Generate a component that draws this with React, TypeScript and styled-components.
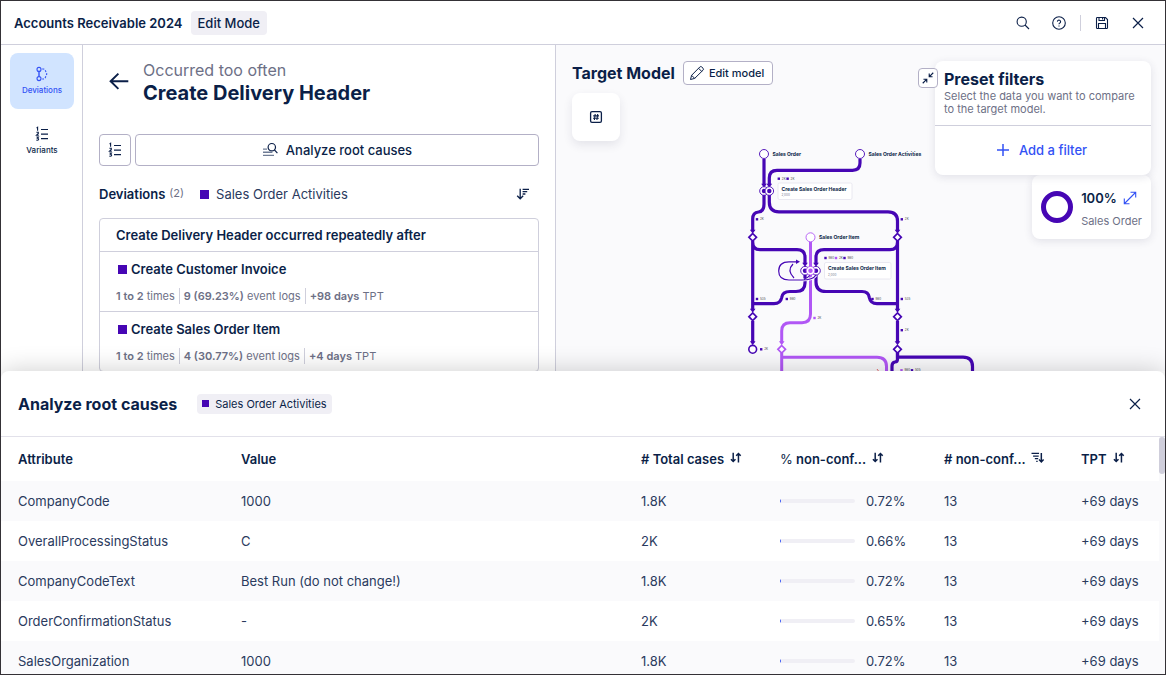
import React from "react";
import styled, { createGlobalStyle } from "styled-components";

const c = {
  ink: "#0b1f48",
  text: "#2a3a5e",
  muted: "#6d7086",
  line: "#cfcfdc",
  control: "#b3b0c6",
  soft: "#f0eff5",
  canvas: "#fafafc",
  blue: "#3352f5",
  purple: "#4606b4",
  lilac: "#b157f5",
};

const GlobalStyle = createGlobalStyle`
  *, *::before, *::after { box-sizing: border-box; }
  body { margin: 0; background: #fff; color: ${c.ink}; font-family: Inter, "Liberation Sans", sans-serif; font-size: 13px; line-height: 16px; }
  h1, h2, h3, h4, p, ul { margin: 0; padding: 0; }
  ul { list-style: none; }
  button { font: inherit; color: inherit; cursor: pointer; }
  svg { display: block; flex: none; }
`;

const Frame = styled.div`
  height: 100vh;
  display: grid;
  grid-template-rows: auto minmax(0, 1fr) 303px;
  border: 1px solid #343136;
  overflow: hidden;
`;

const TopBar = styled.header`
  display: flex;
  align-items: center;
  justify-content: space-between;
  height: 44px;
  padding: 0 15px 0 13px;
  border-bottom: 1px solid ${c.line};
`;

const Row = styled.div<{ $gap: number }>`
  display: flex;
  align-items: center;
  gap: ${(p) => p.$gap}px;
`;

const AppTitle = styled.h1`
  font-size: 13px;
  line-height: 16px;
  font-weight: 600;
`;

const ModeBadge = styled.span`
  padding: 4px 7px;
  border-radius: 4px;
  background: ${c.soft};
  font-size: 13px;
  line-height: 16px;
  font-weight: 500;
`;

const IconButton = styled.button`
  display: flex;
  align-items: center;
  justify-content: center;
  width: 24px;
  height: 24px;
  padding: 0;
  border: 0;
  background: none;
`;

const BarDivider = styled.span`
  width: 1px;
  height: 16px;
  background: ${c.line};
`;

const Workspace = styled.main`
  display: flex;
  min-height: 0;
  overflow: hidden;
`;

const SideNav = styled.nav`
  flex: 0 0 82px;
  display: flex;
  flex-direction: column;
  gap: 4px;
  padding: 8px 8px 0 9px;
  border-right: 1px solid ${c.line};
`;

const NavItem = styled.button<{ $active?: boolean }>`
  display: flex;
  flex-direction: column;
  align-items: center;
  justify-content: center;
  gap: 2px;
  height: 56px;
  padding: 0;
  border: 0;
  border-radius: 8px;
  background: ${(p) => (p.$active ? "#d1e4ff" : "none")};
  color: ${(p) => (p.$active ? c.blue : c.ink)};
  font-size: 8px;
  line-height: 12px;
  font-weight: 500;
`;

const DetailPanel = styled.section`
  flex: 0 0 473px;
  padding: 15px 16px 0;
  border-right: 1px solid ${c.line};
  overflow: hidden;
`;

const DetailHeader = styled.div`
  display: flex;
  align-items: center;
  gap: 12px;
  padding-left: 8px;
  height: 44px;
`;

const Kicker = styled.p`
  font-size: 16px;
  line-height: 22px;
  color: ${c.muted};
`;

const DetailTitle = styled.h2`
  font-size: 20px;
  line-height: 24px;
  font-weight: 700;
`;

const Actions = styled.div`
  display: flex;
  gap: 4px;
  margin-top: 30px;
`;

const OutlineButton = styled.button<{ $size: "icon" | "wide" | "small" }>`
  display: flex;
  align-items: center;
  justify-content: center;
  gap: ${(p) => (p.$size === "small" ? 4 : 8)}px;
  flex: ${(p) => (p.$size === "wide" ? "1" : "none")};
  width: ${(p) => (p.$size === "icon" ? "32px" : "auto")};
  height: ${(p) => (p.$size === "small" ? 24 : 32)}px;
  padding: ${(p) => (p.$size === "small" ? "0 8px 0 5px" : "0")};
  border: 1px solid ${c.control};
  border-radius: 4px;
  background: #fff;
  font-size: ${(p) => (p.$size === "small" ? 11 : 13)}px;
  font-weight: 500;
`;

const ListHeading = styled.div`
  display: flex;
  align-items: center;
  margin-top: 16px;
  height: 24px;
  padding-right: 4px;
`;

const ListTitle = styled.h3`
  font-size: 13px;
  line-height: 16px;
  font-weight: 600;
`;

const Count = styled.span`
  margin: 0 16px 3px 4px;
  font-size: 11px;
  color: ${c.muted};
`;

const Swatch = styled.span<{ $size?: number }>`
  width: ${(p) => p.$size ?? 9}px;
  height: ${(p) => p.$size ?? 9}px;
  background: ${c.purple};
`;

const TypeName = styled.span`
  margin: 0 auto 0 7px;
  color: ${c.text};
`;

const DeviationCard = styled.section`
  margin-top: 12px;
  border: 1px solid ${c.line};
  border-radius: 4px;
`;

const CardHeading = styled.h3`
  height: 32px;
  padding: 0 16px;
  font-size: 13px;
  line-height: 32px;
  font-weight: 600;
`;

const DeviationItem = styled.li`
  height: 60px;
  padding: 9px 16px 0;
  border-top: 1px solid ${c.line};
`;

const DeviationName = styled.h4`
  display: flex;
  align-items: center;
  gap: 4px;
  padding-left: 2px;
  font-size: 13px;
  line-height: 16px;
  font-weight: 600;
`;

const Facts = styled.p`
  display: flex;
  margin-top: 11px;
  font-size: 11px;
  line-height: 16px;
  color: ${c.muted};
  white-space: nowrap;
`;

const Fact = styled.span`
  & + & {
    margin-left: 4px;
    padding-left: 4px;
    border-left: 1px solid ${c.line};
  }
  strong { font-weight: 600; }
`;

const ModelArea = styled.section`
  position: relative;
  flex: 1;
  min-width: 0;
  display: flex;
  justify-content: space-between;
  padding: 16px 14px 0 16px;
  background: ${c.canvas};
  overflow: hidden;
`;

const ModelCanvas = styled.div`
  position: absolute;
  inset: 0;
  display: flex;
  justify-content: center;
  padding-top: 95px;
`;

const ModelTools = styled.div`
  position: relative;
  display: flex;
  flex-direction: column;
  gap: 8px;
`;

const SectionTitle = styled.h2`
  font-size: 16px;
  line-height: 20px;
  font-weight: 700;
`;

const ToolTile = styled.button`
  display: flex;
  align-items: center;
  justify-content: center;
  width: 48px;
  height: 48px;
  padding: 0;
  border: 0;
  border-radius: 8px;
  background: #fff;
  box-shadow: 0 4px 10px rgba(40, 40, 80, 0.1);
`;

const FilterColumn = styled.div`
  position: relative;
  display: flex;
  flex-direction: column;
  align-items: flex-end;
  width: 216px;
`;

const FilterCard = styled.section`
  position: relative;
  width: 100%;
  border-radius: 8px;
  background: #fff;
  box-shadow: 0 2px 8px rgba(40, 40, 80, 0.12);
`;

const CollapseButton = styled.button`
  position: absolute;
  top: 7px;
  left: -17px;
  display: flex;
  align-items: center;
  justify-content: center;
  width: 20px;
  height: 20px;
  padding: 0;
  border: 1px solid ${c.control};
  border-radius: 4px;
  background: #fff;
`;

const FilterIntro = styled.div`
  padding: 8px 9px;
  border-bottom: 1px solid ${c.line};
`;

const FilterText = styled.p`
  font-size: 11px;
  line-height: 13px;
  padding: 1px 0;
  color: ${c.muted};
`;

const AddFilter = styled.button`
  display: flex;
  align-items: center;
  justify-content: center;
  gap: 8px;
  width: 100%;
  height: 49px;
  padding: 0 4px 2px 0;
  border: 0;
  background: none;
  color: ${c.blue};
  font-size: 13px;
  font-weight: 500;
`;

const CoverageCard = styled.section`
  display: flex;
  align-items: center;
  gap: 8px;
  height: 64px;
  padding: 0 9px;
  border-radius: 8px;
  background: #fff;
  box-shadow: 0 2px 8px rgba(40, 40, 80, 0.12);
`;

const CoverageText = styled.div`
  display: flex;
  flex-direction: column;
  gap: 7px;
  padding-top: 4px;
  font-size: 11px;
  color: ${c.muted};
  strong { font-size: 13px; font-weight: 600; color: ${c.ink}; }
`;

const ExpandButton = styled(IconButton)`
  width: 16px;
  height: 16px;
  color: ${c.blue};
`;

const RootCausePanel = styled.section`
  position: relative;
  display: flex;
  flex-direction: column;
  border-radius: 8px 8px 0 0;
  background: #fff;
  box-shadow: 0 0 26px rgba(0, 0, 0, 0.2);
`;

const PanelHeader = styled.header`
  display: flex;
  align-items: center;
  justify-content: space-between;
  flex: 0 0 66px;
  padding: 0 18px 0 17px;
  border-bottom: 1px solid #e2e1ea;
`;

const TypeBadge = styled.span`
  display: flex;
  align-items: center;
  gap: 6px;
  height: 20px;
  padding: 0 5px;
  border-radius: 4px;
  background: ${c.soft};
  font-size: 11px;
`;

const TableArea = styled.div`
  display: flex;
  min-height: 0;
  flex: 1;
  overflow: hidden;
`;

const ScrollTrack = styled.div`
  flex: 0 0 6px;
  background: ${c.canvas};
`;

const ScrollThumb = styled.div`
  height: 37px;
  border-radius: 3px;
  background: #cfcedb;
`;

const Table = styled.table`
  flex: 1;
  align-self: flex-start;
  min-width: 0;
  table-layout: fixed;
  border-collapse: collapse;
  color: ${c.text};
  tbody tr:nth-child(odd) { background: ${c.canvas}; }
`;

const Col = styled.col<{ $w?: number }>`
  width: ${(p) => (p.$w ? p.$w + "px" : "auto")};
`;

const Th = styled.th`
  height: 44px;
  padding: 0 0 0 17px;
  text-align: left;
  font-weight: 600;
  color: ${c.ink};
  white-space: nowrap;
`;

const Td = styled.td`
  height: 40px;
  padding: 0 0 0 17px;
  white-space: nowrap;
`;

const SortButton = styled.button`
  display: flex;
  align-items: center;
  gap: 5px;
  padding: 0;
  border: 0;
  background: none;
  font-weight: 600;
`;

const Unit = styled.span`
  font-weight: 400;
`;

const Meter = styled.div`
  width: 75px;
  height: 4px;
  border-radius: 2px;
  background: ${c.soft};
  overflow: hidden;
`;

const MeterFill = styled.div`
  height: 100%;
  min-width: 1px;
  background: ${c.blue};
`;

type IconProps = { size?: number; sw?: number; children: React.ReactNode };
const Icon = ({ size = 16, sw = 1.2, children }: IconProps) => (
  <svg width={size} height={size} viewBox="0 0 16 16" fill="none" stroke="currentColor" strokeWidth={sw} aria-hidden="true">
    {children}
  </svg>
);

const SearchIcon = () => (
  <Icon sw={1.1}>
    <circle cx="6.7" cy="6.7" r="4.6" />
    <path d="M10 10l4 4" />
  </Icon>
);
const HelpIcon = () => (
  <Icon sw={1.1}>
    <circle cx="8" cy="8" r="6.3" />
    <path d="M6.4 6.6a1.6 1.6 0 1 1 2.400 1.500c-.6.3-.8.6-.8 1.200" />
    <path d="M8 10.400v1.200" />
  </Icon>
);
const SaveIcon = () => (
  <Icon sw={1.1}>
    <path d="M2.500 3.300q0-.8.8-.8h8.200l2 2v8.200q0 .8-.8.8H3.300q-.8 0-.8-.8z" />
    <path d="M5 2.500v3h5.500v-3M8.600 3v1.500M4.500 13.500V8.500h7v5" />
  </Icon>
);
const CloseIcon = () => (
  <Icon sw={1.2}>
    <path d="M3 3l10 10M13 3L3 13" />
  </Icon>
);
const DeviationIcon = () => (
  <Icon sw={1.1}>
    <circle cx="5" cy="3.4" r="2" />
    <circle cx="5" cy="12.6" r="2" />
    <path d="M5 5.4v5.2" strokeWidth="1.4" />
    <path d="M8.200 3h1.200q1.600.2 2 1.600l1.400 3.400-1.400 3.400q-.4 1.400-2 1.600H8.200" strokeDasharray="2 1.300" />
  </Icon>
);
const NumberedListIcon = () => (
  <Icon sw={1.2}>
    <path d="M7 3.500h7M7 8.200h7M7 12.600h7" />
    <path d="M2.600 2l1-.7v3.400M2.400 6.300h1.900v1.200L2.500 9.300h2.300M2.400 11h2l-1 1.300q1.300 0 1.200 1-.3 1.200-2.200.8" strokeWidth="1.100" />
  </Icon>
);
const BackIcon = () => (
  <Icon size={24} sw={1.3}>
    <path d="M14.200 7.500H2.400M7.600 2.400L2.400 7.500l5.200 5.100" />
  </Icon>
);
const AnalyzeIcon = () => (
  <Icon sw={1.2}>
    <circle cx="9.800" cy="5.200" r="3.700" />
    <path d="M12.400 7.900l3 3.300" />
    <path d="M1 7.100h4M1 10.300h9.400M1 13.400h11" stroke="#6f7c95" strokeWidth="1.400" />
  </Icon>
);
const SortListIcon = () => (
  <Icon sw={1.3}>
    <path d="M5.200 2.800v9.800M2.200 9.700l3 3.100 3-3.100" />
    <path d="M7.600 3.300H14M7.600 5.600h4.600M7.600 8h2.800" />
  </Icon>
);
const PencilIcon = () => (
  <Icon sw={1}>
    <path d="M1.500 14.500l1.100-4.200L10.800 2q1-1 2 0l1.200 1.200q1 1 0 2L5.700 13.400z" />
    <path d="M9.600 3.300l3.100 3.100M2.600 10.300l3.100 3.100" />
  </Icon>
);
const HashIcon = () => (
  <Icon sw={1.3}>
    <rect x="2.600" y="2.600" width="10.800" height="10.800" rx="1.400" />
    <path d="M7.200 5l-.8 6M9.700 5l-.8 6M5.200 6.900h5.800M5 9.200h5.800" strokeWidth="1.100" />
  </Icon>
);
const CollapseIcon = () => (
  <Icon size={14} sw={1.3}>
    <path d="M14 2L9.600 6.400M9.400 2.800v3.800h3.800M2 14l4.400-4.400M2.800 9.400h3.800v3.800" />
  </Icon>
);
const PlusIcon = () => (
  <Icon sw={1.5}>
    <path d="M8 2v12M2 8h12" />
  </Icon>
);
const ExpandIcon = () => (
  <Icon sw={1.1}>
    <path d="M2.500 13.500l11-11M8.500 2.300h5.200v5.200M2.300 8.500v5.200h5.200" />
  </Icon>
);
const SortBothIcon = () => (
  <Icon size={14} sw={1.7}>
    <path d="M4.800 .8v10M2.200 8.200l2.600 2.700 2.600-2.700M10.800 12V2M8.200 4.400l2.600-2.700 2.600 2.700" />
  </Icon>
);
const SortDescIcon = () => (
  <Icon size={14} sw={1.4}>
    <path d="M11.800 1v10M9.200 8.500l2.600 2.800 2.600-2.800" strokeWidth="1.700" />
    <path d="M.6 1.600h8.600M2.400 4.600h6.400M4.400 7.600h3.800M6 10.600h1.600" />
  </Icon>
);

const P = c.purple;
const L = c.lilac;

const Tag = ({ x, y, t, color = P }: { x: number; y: number; t: string; color?: string }) => (
  <g>
    <rect x={x - 1.2} y={y - 1.2} width="2.4" height="2.4" fill={color} />
    <text x={x + 3} y={y + 1.1} fontSize="3" fill="#444">{t}</text>
  </g>
);
const Gate = ({ x, y, color = P }: { x: number; y: number; color?: string }) => (
  <path d={`M${x} ${y - 3.8}l3.8 3.8l-3.8 3.8l-3.8 -3.8z`} fill="#fff" stroke={color} strokeWidth="1.7" />
);
const Arrow = ({ x, y, color = P }: { x: number; y: number; color?: string }) => (
  <path d={`M${x - 2.8} ${y - 3.8}h5.6l-2.8 4z`} fill={color} />
);
const EventNode = ({ x, y, color = P }: { x: number; y: number; color?: string }) => (
  <g>
    <circle cx={x} cy={y} r="4.3" fill="#fff" stroke={color} strokeWidth=".9" />
    <circle cx={x} cy={y} r="2.2" fill={color} />
  </g>
);
const StartNode = ({ x, y, t, color = P }: { x: number; y: number; t: string; color?: string }) => (
  <g>
    <circle cx={x} cy={y} r="4.5" fill="#fff" stroke={color} strokeWidth=".9" />
    <text x={x + 8.5} y={y + 1.8} fontSize="5" fontWeight="700" fill={c.ink}>{t}</text>
  </g>
);
const ActivityBox = ({ x, y, w, t }: { x: number; y: number; w: number; t: string }) => (
  <g>
    <rect x={x} y={y} width={w} height="16.5" rx="1.5" fill="#fff" stroke="#e4e3ee" strokeWidth=".8" />
    <text x={x + 3.5} y={y + 7.5} fontSize="5" fontWeight="700" fill={c.ink}>{t}</text>
    <text x={x + 3.5} y={y + 13} fontSize="3" fill="#6d7086">2,000</text>
  </g>
);

const ProcessGraph = () => (
  <svg width="250" height="240" viewBox="736 140 250 240" fill="none" role="img" aria-label="Target process model">
    <g stroke={L} strokeWidth="3">
      <path d="M810.5 242V314Q810.5 322.7 802 322.7H790Q781.7 322.7 781.7 331V343" />
      <path d="M781.7 353V380M781.7 357.2H877Q886.5 357.2 886.5 366.5V380" />
    </g>
    <g stroke={P} strokeWidth="3.2">
      <path d="M764 159V185" />
      <path d="M860 159V163Q860 170.3 852.5 170.3H777Q769.3 170.3 769.3 178V185" />
      <path d="M764 195V204Q764 211.5 758.5 212Q752.7 212.5 752.7 219V231" />
      <path d="M769.3 195V202Q769.3 211.8 779 211.8H888Q897.5 211.8 897.5 221V231" />
      <path d="M752.7 241V310M752.7 242Q752.7 249.7 760 249.7H797Q805 249.7 805 257V264" />
      <path d="M897.5 241V310M897.5 242Q897.5 249.7 890 249.7H824Q816 249.7 816 257V264" />
      <path d="M805 275V283Q805 291.5 796 291.5H790Q782.5 291.5 781.7 297.5Q780.5 303.7 774 303.7H752.7" />
      <path d="M816 275V282Q816 291.5 826 291.5H862Q868.5 291.5 869.3 297.5Q870.5 303.7 877 303.7H897.5" />
      <path d="M752.7 321V343M897.5 321V343" />
      <path d="M897.5 352V357.2H963Q972.5 357.2 972.5 366.5V380" />
      <path d="M897.5 353V359Q897.5 362 895 362Q892 362.5 892 366V380" />
    </g>
    <path d="M816 275Q813 280 802 280H789Q778.7 280 778.7 271Q778.7 261.8 789 261.8H797" stroke="#fff" strokeWidth="3" />
    <path d="M816 275Q813 280 802 280H789Q778.7 280 778.7 271Q778.7 261.8 789 261.8H797M810 275Q808 278 804 279M793 264Q786.5 270.5 794 278" stroke={P} strokeWidth="1.2" />
    <path d="M796 259.5l4 2.3l-4 2.3z" fill={P} />

    <Arrow x={764} y={187.5} />
    <Arrow x={769.3} y={187.5} />
    <Arrow x={752.7} y={233.5} />
    <Arrow x={897.5} y={233.5} />
    <Arrow x={805} y={266.5} />
    <Arrow x={816} y={266.5} />
    <Arrow x={752.7} y={312.5} />
    <Arrow x={897.5} y={312.5} />
    <Arrow x={752.7} y={345} />
    <Arrow x={897.5} y={345} />
    <Arrow x={781.7} y={345} color={L} />

    <StartNode x={764} y={154} t="Sales Order" />
    <StartNode x={860} y={154} t="Sales Order Activities" />
    <StartNode x={810.5} y={237.3} t="Sales Order Item" color={L} />
    <EventNode x={764} y={191} />
    <EventNode x={769.3} y={191} />
    <EventNode x={805} y={270.7} />
    <EventNode x={816} y={270.7} />
    <EventNode x={810.5} y={270.7} color={L} />
    <Gate x={752.7} y={237.3} />
    <Gate x={897.5} y={237.3} />
    <Gate x={752.7} y={316.7} />
    <Gate x={897.5} y={316.7} />
    <Gate x={897.5} y={349.3} />
    <Gate x={781.7} y={349.3} color={L} />
    <circle cx="752.7" cy="349.3" r="3.9" fill="#fff" stroke={P} strokeWidth="1.6" />

    <ActivityBox x={778} y={183} w={74} t="Create Sales Order Header" />
    <ActivityBox x={824.5} y={262.5} w={66.5} t="Create Sales Order Item" />

    <Tag x={778.8} y={178.7} t="2K" />
    <Tag x={787.6} y={178.7} t="2K" />
    <Tag x={757} y={219.3} t="2K" />
    <Tag x={901.8} y={219.3} t="2K" />
    <Tag x={825.5} y={258} t="980" />
    <Tag x={836} y={258} t="2K" color={L} />
    <Tag x={844.5} y={258} t="980" />
    <Tag x={757} y={299} t="535" />
    <Tag x={786.8} y={299} t="980" />
    <Tag x={872.5} y={299} t="980" />
    <Tag x={901.8} y={299} t="535" />
    <Tag x={814.5} y={318} t="2K" color={L} />
    <Tag x={901.8} y={330.2} t="2K" />
    <Tag x={761.2} y={349.3} t="2K" />
    <Tag x={901.5} y={370.3} t="980" color={L} />
    <Tag x={912} y={370.3} t="505" />
    <path d="M877 369l1.8 2.5" stroke="#e0454a" strokeWidth=".8" />
  </svg>
);

const deviations = [
  { name: "Create Customer Invoice", logs: "9 (69.23%)", days: "+98 days" },
  { name: "Create Sales Order Item", logs: "4 (30.77%)", days: "+4 days" },
];

const causes = [
  { attribute: "CompanyCode", value: "1000", total: "1.8K", pct: 0.72 },
  { attribute: "OverallProcessingStatus", value: "C", total: "2K", pct: 0.66 },
  { attribute: "CompanyCodeText", value: "Best Run (do not change!)", total: "1.8K", pct: 0.72 },
  { attribute: "OrderConfirmationStatus", value: "-", total: "2K", pct: 0.65 },
  { attribute: "SalesOrganization", value: "1000", total: "1.8K", pct: 0.72 },
];

export default function App() {
  return (
    <>
      <GlobalStyle />
      <Frame>
        <TopBar>
          <Row $gap={8}>
            <AppTitle>Accounts Receivable 2024</AppTitle>
            <ModeBadge>Edit Mode</ModeBadge>
          </Row>
          <Row $gap={9}>
            <Row $gap={12}>
              <IconButton aria-label="Search"><SearchIcon /></IconButton>
              <IconButton aria-label="Help"><HelpIcon /></IconButton>
            </Row>
            <BarDivider />
            <Row $gap={12}>
              <IconButton aria-label="Save"><SaveIcon /></IconButton>
              <IconButton aria-label="Close"><CloseIcon /></IconButton>
            </Row>
          </Row>
        </TopBar>

        <Workspace>
          <SideNav>
            <NavItem $active><DeviationIcon />Deviations</NavItem>
            <NavItem><NumberedListIcon />Variants</NavItem>
          </SideNav>

          <DetailPanel>
            <DetailHeader>
              <IconButton aria-label="Back"><BackIcon /></IconButton>
              <div>
                <Kicker>Occurred too often</Kicker>
                <DetailTitle>Create Delivery Header</DetailTitle>
              </div>
            </DetailHeader>
            <Actions>
              <OutlineButton $size="icon" aria-label="Show variants"><NumberedListIcon /></OutlineButton>
              <OutlineButton $size="wide"><AnalyzeIcon />Analyze root causes</OutlineButton>
            </Actions>
            <ListHeading>
              <ListTitle>Deviations</ListTitle>
              <Count>(2)</Count>
              <Swatch />
              <TypeName>Sales Order Activities</TypeName>
              <IconButton aria-label="Sort deviations"><SortListIcon /></IconButton>
            </ListHeading>
            <DeviationCard>
              <CardHeading>Create Delivery Header occurred repeatedly after</CardHeading>
              <ul>
                {deviations.map((d) => (
                  <DeviationItem key={d.name}>
                    <DeviationName><Swatch />{d.name}</DeviationName>
                    <Facts>
                      <Fact><strong>1 to 2</strong> times</Fact>
                      <Fact><strong>{d.logs}</strong> event logs</Fact>
                      <Fact><strong>{d.days}</strong> TPT</Fact>
                    </Facts>
                  </DeviationItem>
                ))}
              </ul>
            </DeviationCard>
          </DetailPanel>

          <ModelArea>
            <ModelCanvas><ProcessGraph /></ModelCanvas>
            <ModelTools>
              <Row $gap={8}>
                <SectionTitle>Target Model</SectionTitle>
                <OutlineButton $size="small"><PencilIcon />Edit model</OutlineButton>
              </Row>
              <ToolTile aria-label="Toggle counts"><HashIcon /></ToolTile>
            </ModelTools>
            <FilterColumn>
              <FilterCard>
                <CollapseButton aria-label="Collapse filters"><CollapseIcon /></CollapseButton>
                <FilterIntro>
                  <SectionTitle>Preset filters</SectionTitle>
                  <FilterText>Select the data you want to compare to the target model.</FilterText>
                </FilterIntro>
                <AddFilter><PlusIcon />Add a filter</AddFilter>
              </FilterCard>
              <CoverageCard>
                <svg width="32" height="32" viewBox="0 0 32 32" aria-hidden="true">
                  <circle cx="16" cy="16" r="13.5" fill="none" stroke={P} strokeWidth="5" />
                </svg>
                <CoverageText>
                  <Row $gap={5}>
                    <strong>100%</strong>
                    <ExpandButton aria-label="Expand"><ExpandIcon /></ExpandButton>
                  </Row>
                  <span>Sales Order</span>
                </CoverageText>
              </CoverageCard>
            </FilterColumn>
          </ModelArea>
        </Workspace>

        <RootCausePanel>
          <PanelHeader>
            <Row $gap={20}>
              <SectionTitle>Analyze root causes</SectionTitle>
              <TypeBadge><Swatch $size={7} />Sales Order Activities</TypeBadge>
            </Row>
            <IconButton aria-label="Close root causes"><CloseIcon /></IconButton>
          </PanelHeader>
          <TableArea>
            <Table>
              <colgroup>
                <Col $w={223} />
                <Col />
                <Col $w={139} />
                <Col $w={164} />
                <Col $w={137} />
                <Col $w={95} />
              </colgroup>
              <thead>
                <tr>
                  <Th>Attribute</Th>
                  <Th>Value</Th>
                  <Th><SortButton># Total cases<SortBothIcon /></SortButton></Th>
                  <Th><SortButton><span><Unit>%</Unit> non-conf...</span><SortBothIcon /></SortButton></Th>
                  <Th><SortButton># non-conf...<SortDescIcon /></SortButton></Th>
                  <Th><SortButton>TPT<SortBothIcon /></SortButton></Th>
                </tr>
              </thead>
              <tbody>
                {causes.map((r) => (
                  <tr key={r.attribute}>
                    <Td>{r.attribute}</Td>
                    <Td>{r.value}</Td>
                    <Td>{r.total}</Td>
                    <Td>
                      <Row $gap={11}>
                        <Meter><MeterFill style={{ width: `${r.pct}%` }} /></Meter>
                        {r.pct}%
                      </Row>
                    </Td>
                    <Td>13</Td>
                    <Td>+69 days</Td>
                  </tr>
                ))}
              </tbody>
            </Table>
            <ScrollTrack><ScrollThumb /></ScrollTrack>
          </TableArea>
        </RootCausePanel>
      </Frame>
    </>
  );
}
